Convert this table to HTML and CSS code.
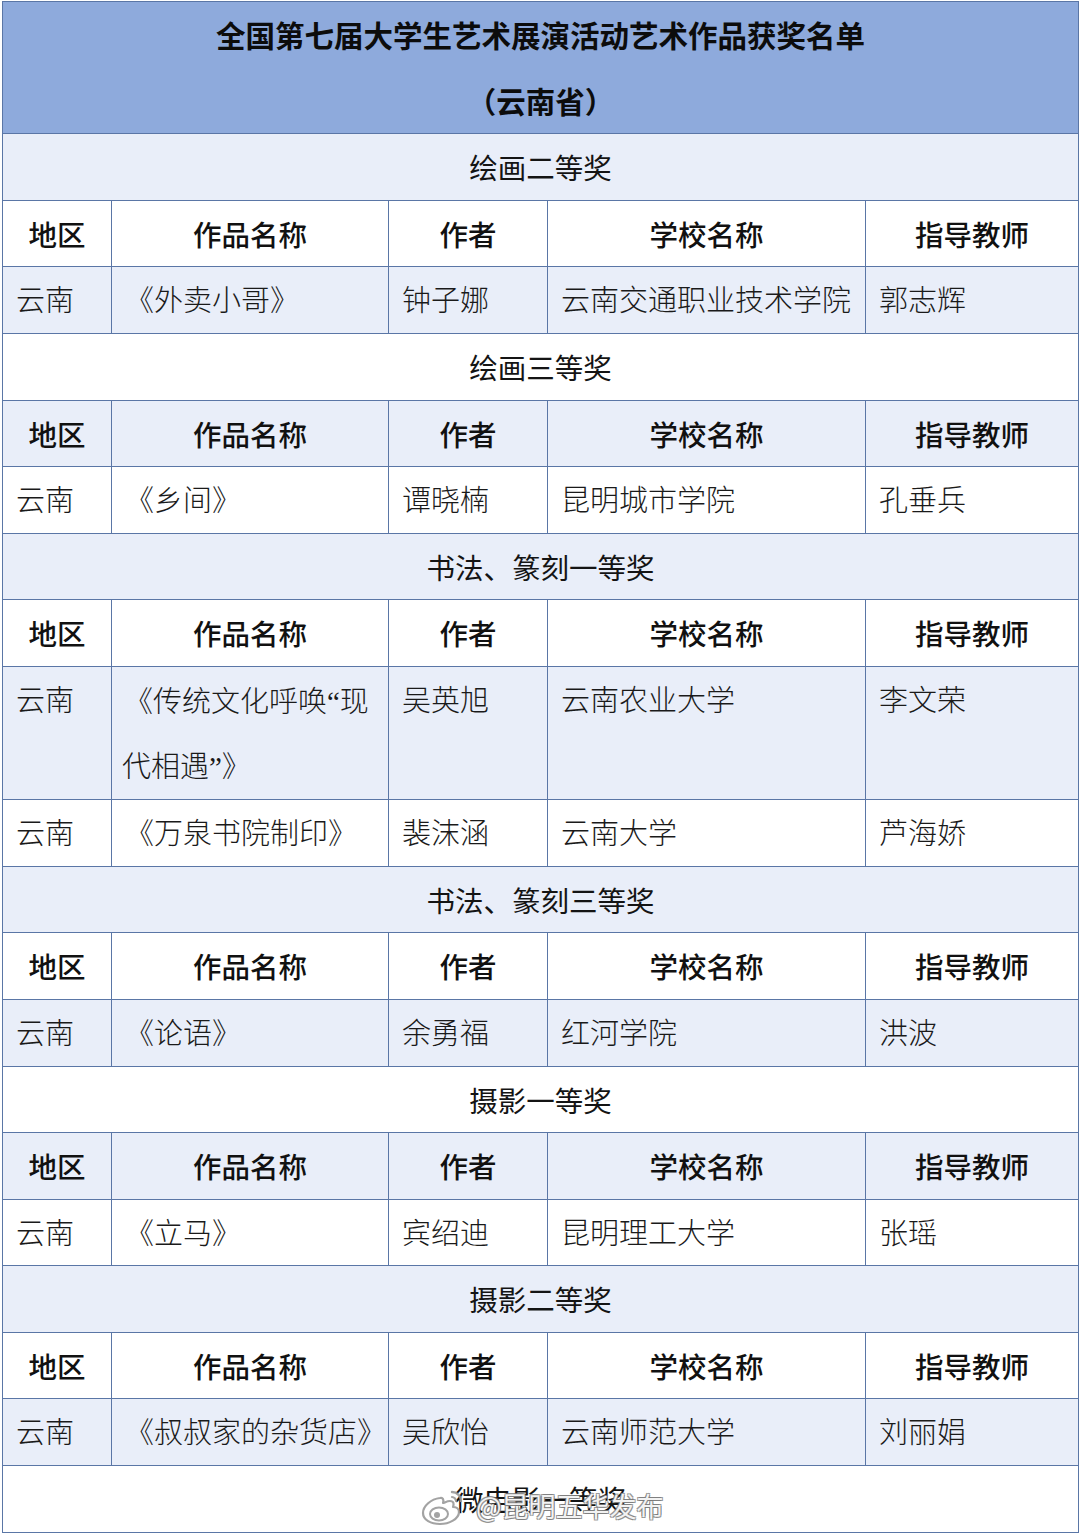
FILE: index.html
```html
<!DOCTYPE html>
<html lang="zh-CN">
<head>
<meta charset="utf-8">
<title>全国第七届大学生艺术展演活动艺术作品获奖名单（云南省）</title>
<link rel="stylesheet" href="styles.css">
</head>
<body>
<div class="page">
  <table class="list">
    <colgroup>
      <col class="c1"><col class="c2"><col class="c3"><col class="c4"><col class="c5">
    </colgroup>
    <tbody>
      <tr class="title-row"><td colspan="5" class="title">全国第七届大学生艺术展演活动艺术作品获奖名单<br>（云南省）</td></tr>

      <tr class="alt"><td colspan="5" class="section">绘画二等奖</td></tr>
      <tr class="head"><td>地区</td><td>作品名称</td><td>作者</td><td>学校名称</td><td>指导教师</td></tr>
      <tr class="data alt"><td>云南</td><td>《外卖小哥》</td><td>钟子娜</td><td>云南交通职业技术学院</td><td>郭志辉</td></tr>

      <tr><td colspan="5" class="section">绘画三等奖</td></tr>
      <tr class="head alt"><td>地区</td><td>作品名称</td><td>作者</td><td>学校名称</td><td>指导教师</td></tr>
      <tr class="data"><td>云南</td><td>《乡间》</td><td>谭晓楠</td><td>昆明城市学院</td><td>孔垂兵</td></tr>

      <tr class="alt"><td colspan="5" class="section">书法、篆刻一等奖</td></tr>
      <tr class="head"><td>地区</td><td>作品名称</td><td>作者</td><td>学校名称</td><td>指导教师</td></tr>
      <tr class="data alt"><td>云南</td><td class="wrap">《传统文化呼唤“现<br><span class="cont">代相遇”》</span></td><td>吴英旭</td><td>云南农业大学</td><td>李文荣</td></tr>
      <tr class="data"><td>云南</td><td>《万泉书院制印》</td><td>裴沫涵</td><td>云南大学</td><td>芦海娇</td></tr>

      <tr class="alt"><td colspan="5" class="section">书法、篆刻三等奖</td></tr>
      <tr class="head"><td>地区</td><td>作品名称</td><td>作者</td><td>学校名称</td><td>指导教师</td></tr>
      <tr class="data alt"><td>云南</td><td>《论语》</td><td>余勇福</td><td>红河学院</td><td>洪波</td></tr>

      <tr><td colspan="5" class="section">摄影一等奖</td></tr>
      <tr class="head alt"><td>地区</td><td>作品名称</td><td>作者</td><td>学校名称</td><td>指导教师</td></tr>
      <tr class="data"><td>云南</td><td>《立马》</td><td>宾绍迪</td><td>昆明理工大学</td><td>张瑶</td></tr>

      <tr class="alt"><td colspan="5" class="section">摄影二等奖</td></tr>
      <tr class="head"><td>地区</td><td>作品名称</td><td>作者</td><td>学校名称</td><td>指导教师</td></tr>
      <tr class="data alt"><td>云南</td><td>《叔叔家的杂货店》</td><td>吴欣怡</td><td>云南师范大学</td><td>刘丽娟</td></tr>

      <tr><td colspan="5" class="section">微电影一等奖</td></tr>
    </tbody>
  </table>

  <div class="watermark">
    <svg class="wb-logo" viewBox="0 0 48 40" width="48" height="40" aria-hidden="true">
      <path d="M20 12c-9 1-17 8-17 15 0 7 8 11 17 11s19-5 19-12c0-4-4-5-6-5 1-3 1-6-3-6-3 0-6 2-7 2 1-3 0-6-3-5z" fill="#fff" stroke="#9a9a9a" stroke-width="2.2" stroke-linejoin="round"/>
      <ellipse cx="19" cy="28" rx="9" ry="6.5" fill="#fff" stroke="#9a9a9a" stroke-width="2"/>
      <circle cx="17" cy="29" r="3" fill="#9a9a9a"/>
      <path d="M32 6c5 0 9 4 9 9" fill="none" stroke="#9a9a9a" stroke-width="2.4" stroke-linecap="round"/>
      <path d="M32 11c2 0 4 2 4 4" fill="none" stroke="#9a9a9a" stroke-width="2.2" stroke-linecap="round"/>
    </svg>
    <span class="wb-text">@昆明五华发布</span>
  </div>
</div>
</body>
</html>
```

FILE: styles.css
```css
html, body {
  margin: 0;
  padding: 0;
  background: #ffffff;
}

.page {
  position: relative;
  width: 1080px;
  height: 1535px;
  overflow: hidden;
  padding: 1px 0 0 2px;
  box-sizing: border-box;
}

.list {
  border-collapse: collapse;
  table-layout: fixed;
  width: 1076px;
  font-family: "Noto Sans CJK SC", sans-serif;
  color: #111111;
}

.c1 { width: 109px; }
.c2 { width: 277px; }
.c3 { width: 159px; }
.c4 { width: 318px; }
.c5 { width: 213px; }

.list td {
  border: 1px solid #5a76a6;
  padding: 0;
  font-size: 28.5px;
  line-height: 65.6px;
  height: 65.6px;
  white-space: nowrap;
  overflow: hidden;
}

.alt td {
  background: #e9eef9;
}

.title-row td {
  background: #8eaadc;
  height: 131px;
}

.list td.title {
  text-align: center;
  font-weight: 700;
  font-size: 29.5px;
  color: #0c0c0c;
}

.section {
  text-align: center;
  font-weight: 400;
  color: #141414;
}

.head td {
  text-align: center;
  font-weight: 500;
  color: #111111;
}

.data td {
  text-align: left;
  padding: 3px 0 0 13px;
  height: 62.6px;
  font-size: 29px;
  line-height: 62.6px;
  font-family: "Liberation Serif", "Noto Sans CJK SC", serif;
  font-weight: 300;
  color: #1a1a1a;
  vertical-align: top;
}

.data td.wrap {
  padding-left: 12px;
  line-height: 64.6px;
}

.data td.wrap .cont {
  margin-left: -2px;
}

.watermark {
  position: absolute;
  left: 420px;
  top: 1486px;
  display: flex;
  align-items: center;
  gap: 8px;
  pointer-events: none;
}

.wb-logo {
  display: block;
  opacity: 0.9;
}

.wb-text {
  font-family: "Noto Sans CJK SC", sans-serif;
  font-size: 27px;
  line-height: 40px;
  color: rgba(255, 255, 255, 0.92);
  text-shadow:
    1px 1px 0 rgba(120, 120, 120, 0.75),
    -1px -1px 0 rgba(120, 120, 120, 0.75),
    1px -1px 0 rgba(120, 120, 120, 0.75),
    -1px 1px 0 rgba(120, 120, 120, 0.75);
}
```
